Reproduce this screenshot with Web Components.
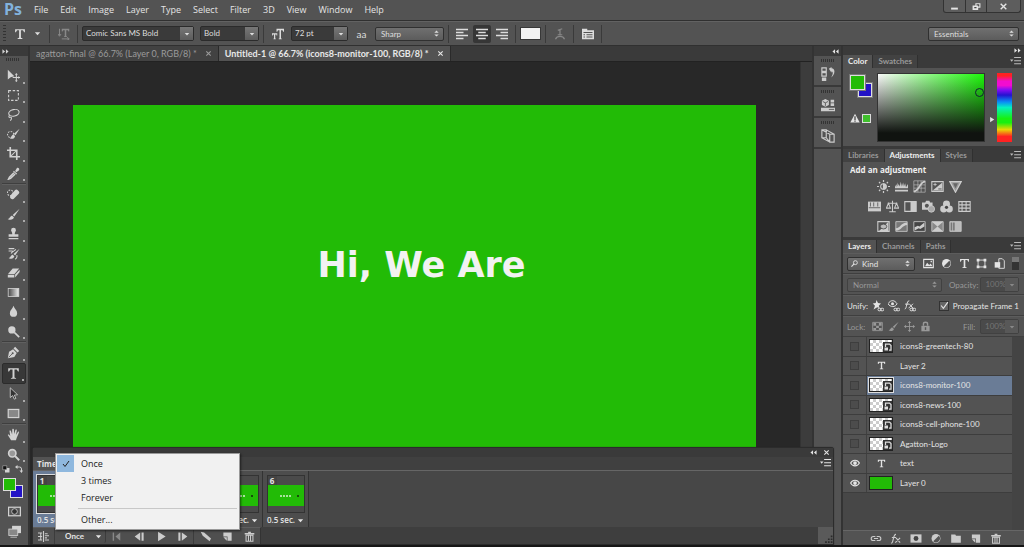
<!DOCTYPE html>
<html lang="en">
<head>
<meta charset="utf-8">
<title>Photoshop workspace</title>
<style>
html,body{margin:0;height:100%;background:#535353;overflow:hidden}
body{font:9px/12px "Open Sans","Noto Sans",sans-serif;color:#e4e4e4}
</style>
</head>
<body>
<ps-app></ps-app>
<script>
const base = `
*,:host{box-sizing:border-box}
button,select,input{font:inherit;color:inherit;margin:0;padding:0;border:0;background:none;appearance:none;outline:0;min-width:0;border-radius:0}
button{display:flex;align-items:center;justify-content:center}
`;
const define = (name, css, html) => customElements.define(name, class extends HTMLElement {
  constructor() { super(); this.attachShadow({mode: 'open'}); }
  connectedCallback() {
    const body = typeof html === 'function' ? html(k => this.getAttribute(k) || '') : html;
    this.shadowRoot.innerHTML = `<style>${base}${css}</style>${body}`;
  }
});

// All glyphs share a 16 x 16 grid.
const S = 'fill="none" stroke="currentColor" stroke-width="1.3"';
const link = `<g ${S}><rect x="8" y="11" width="4" height="3.4" rx="1.5"/><rect x="11.6" y="11" width="4" height="3.4" rx="1.5"/></g>`;
const icons = {
  move: `<path d="M1 1v12l3.500-3 4.500-1z"/><path d="M11.500 6v9M7 10.500h9" ${S}/><path d="M11.500 5l1.800 2h-3.600zM11.500 16l1.800-2h-3.600zM16 10.500l-2-1.800v3.600z"/>`,
  marquee: `<rect x="2" y="2" width="12" height="12" ${S} stroke-dasharray="3 2"/>`,
  lasso: `<ellipse cx="8.500" cy="6" rx="6.500" ry="4" transform="rotate(-12 8 6)" ${S}/><path d="M3 9c-1 1-1 3 1 2.500s2 2 0 4" ${S}/>`,
  quick: `<circle cx="4.500" cy="8" r="3.800" ${S} stroke-dasharray="2 1.500"/><path d="M15.500 1L8.500 7l2 2zM8 8c-2 0-2 3-4.500 4.500 2.500 1.500 6 .5 6.500-2.500z"/>`,
  crop: `<path d="M4 0v12h12M0 4h12v12" fill="none" stroke="currentColor" stroke-width="2"/><path d="M5 11l7-7" ${S}/>`,
  dropper: `<path d="M10 5l2-3.500c1.500-1.500 4 .5 2.800 2.500L11.500 6.500zM8.500 4.500l4 3.800-1 1-4-3.800z"/><path d="M8.500 7L3 12.500 1.800 15l2.600-1L10 8.500" fill="none" stroke="currentColor" stroke-width="1.800"/>`,
  heal: `<circle cx="4" cy="6" r="3.500" ${S} stroke-dasharray="2 1.500"/><path d="M12.500 2l2 2a2.200 2.200 0 010 3L8 13.500a3 3 0 01-4-4L10 2.500a2 2 0 012.500-.5z"/>`,
  brush: `<path d="M15.500 1L7 8.500l2 2zM6.300 9.500c-2.500 0-2 3-5.500 4 3 2 7.500 1 7.700-2z"/>`,
  stamp: `<path d="M8 1a3 3 0 013 3c0 1.500-1.500 2-1.500 5H14v3H2V9h4.500C6.500 6 5 5.500 5 4a3 3 0 013-3zM2 13.500h12V15H2z"/>`,
  history: `<path d="M15.500 2L8 8.500l2 2zM7 9.500c-2 0-2 3-5 4 3 2 6.500 1 7-2z"/><path d="M2 2h7M2 5h5M11 3c-2 2-5 3-6 5M12 10c1 3 0 4-2 5" ${S}/>`,
  eraser: `<path d="M7 3h8L9 10H1zM1 11h8v3H1zM10 10.500l5.500-6v3L10 14z"/>`,
  gradient: `<defs><linearGradient id="g"><stop stop-color="#444"/><stop offset="1" stop-color="#eee"/></linearGradient></defs><rect x="1.500" y="3" width="13" height="10" fill="url(#g)" stroke="currentColor"/>`,
  drop: `<path d="M8 1c1 3.500 4.500 5.500 4.500 9a4.500 4.500 0 01-9 0C3.500 6.500 7 4.500 8 1z"/>`,
  dodge: `<circle cx="6" cy="6" r="4.500"/><path d="M9 9l6 6" fill="none" stroke="currentColor" stroke-width="2"/>`,
  pen: `<path d="M10 1l5 5-2 2-5-5zM7.500 4L2.500 7 1 15l8-1.500 3-5z"/><path d="M2 14l5-5" stroke="#535353"/><circle cx="7" cy="9" r="1.200" fill="#535353"/>`,
  type: `<path d="M1.500 1.500h13v4h-1L12 3H9.200v10l2 .8v.7H4.800v-.7l2-.8V3H4L2.500 5.500h-1z"/>`,
  arrow: `<path d="M4 1v12l3-2.500 2 4.500 2-1-2-4 4-.5z" fill="#333" stroke="currentColor"/>`,
  rect: `<rect x="1.500" y="3" width="13" height="10" fill="#888" stroke="currentColor" stroke-width="1.500"/>`,
  hand: `<path d="M5 15L1 8.500c1-1 2 0 3 1.500L3 3.500c1-1 2 0 2.200 1L6.300 8 6.500 1.500c1-1 2-.5 2 .5l.2 5.500L10.500 2c1-.5 1.800 0 1.500 1l-1 5.500 2.500-4c1-.5 1.500.3 1 1.500L12 12l-1 3z"/>`,
  zoom: `<circle cx="6.500" cy="6.500" r="4.500" fill="#999" stroke="currentColor" stroke-width="2"/><path d="M10 10l5 5" fill="none" stroke="currentColor" stroke-width="2.500"/>`,
  defcol: `<path d="M6 6h9v9H6z"/><path d="M1.500 1.500h8v8h-8z" fill="#111" stroke="currentColor"/>`,
  swap: `<path d="M3 4h6q4 0 4 4v4" fill="none" stroke="currentColor" stroke-width="2"/><path d="M0 4l5-4v8zM13 16l-4-5h7z"/>`,
  mask: `<path d="M0 2h16v12H0z"/><rect x="1.500" y="3.500" width="13" height="9" fill="#555"/><circle cx="8" cy="8" r="3.500" fill="#333" stroke="currentColor"/>`,
  screen: `<path d="M5 1h11v9H5z"/><rect x="1" y="5" width="11" height="8" fill="#888" stroke="currentColor"/><path d="M3 15h8" stroke="currentColor"/>`,
  tri: `<path d="M2 5h12l-6 7z"/>`,
  updown: `<path d="M8 1l5 5H3zM8 15l5-5H3z"/>`,
  orient: `<path d="M5 1h10v3.500h-1L13 3h-2v8h1v1H8v-1h1V3H7L6 4.500H5z"/><path d="M2 1v9M0 8l2 3 2-3M5 14.500h9M12 12.500l3 2-3 2" ${S}/>`,
  size: `<path d="M6 1h10v4h-1l-1-2h-2v11h1v1H9v-1h1V3H8L7 5H6zM0 7h7v3H6V8.500H4.300V14H5v1H2v-1h.7V8.500H1V10H0z"/>`,
  left: `<path d="M0 1h16v2H0zM0 5h10v2H0zM0 9h16v2H0zM0 13h10v2H0z"/>`,
  center: `<path d="M0 1h16v2H0zM3 5h10v2H3zM0 9h16v2H0zM3 13h10v2H3z"/>`,
  right: `<path d="M0 1h16v2H0zM6 5h10v2H6zM0 9h16v2H0zM6 13h10v2H6z"/>`,
  warp: `<path d="M5 3l6-2M8 2v7M2 15c2-5 10-5 12 0M5 9h6" fill="none" stroke="currentColor" stroke-width="1.600"/>`,
  panel: `<path d="M0 1h7v2h9v12H0z"/><path d="M2 6h12M2 9h2M6 9h8M2 12h2M6 12h8" stroke="#444" stroke-width="1.200"/>`,
  ff: `<path d="M1 3l6 5-6 5zM9 3l6 5-6 5z"/>`, rw: `<path d="M7 3L1 8l6 5zM15 3L9 8l6 5z"/>`,
  menu: `<path d="M0 5h5L2.500 8.500zM6 1.500h10V3H6zM6 6h10v1.500H6zM6 10.500h10V12H6z"/>`,
  close: `<path d="M3 3l10 10M13 3L3 13" fill="none" stroke="currentColor" stroke-width="2.500"/>`,
  min: `<path d="M2 10h12v3.500H2z"/>`,
  restore: `<path d="M6 2h9v8h-4v4H1V6h5z"/><path d="M8 4h5v4h-2V6H8zM4 9h4v2H4z" fill="#444"/>`,
  hist: `<path d="M1 1h5v4H1zM1 6.500h5v4H1z" ${S}/><path d="M1 12h5v4H1zM9 2l3-2v1.500c5 0 4 8-.5 10.500C14 8 14 5 12 5v1.500z"/>`,
  props: `<path d="M1 3l4-2 4 2v5l-4 2-4-2zM11 2h4v3h-4zM11 6h4v3h-4zM0 11h16v4H0z"/><path d="M2 4l3 1.500L8 4M5 5.500V9M9 13h6" fill="none" stroke="#535353"/>`,
  comps: `<path d="M1 1h5v9H1zM10 6h5v9h-5zM1 1l9 5M6 1l9 5M1 10l9 5M6 10l4 5" ${S}/>`,
  warn: `<path d="M8 1l7.500 14H.5z"/><path d="M8 5v6M8 12v2" stroke="#444" stroke-width="2"/>`,
  sun: `<circle cx="8" cy="8" r="3.500" ${S}/><path d="M8 5v6a3 3 0 000-6zM8 0v2.500M8 13.500V16M0 8h2.500M13.500 8H16M2.500 2.500l1.500 1.500M12 12l1.500 1.500M13.500 2.500L12 4M4 12l-1.500 1.500" stroke="currentColor" stroke-width="1.500"/>`,
  levels: `<path d="M0 10V6l1.500 3V5L3 8V3l1.500 4V5L6 8l1-6 1.500 6L10 3l1 5 1.500-4 1 5L16 5v5zM0 12h16v2H0z"/>`,
  curves: `<path d="M1 1h14v14H1zM1 6h14M1 10h14M6 1v14M10 1v14" fill="none" stroke="currentColor" stroke-width=".7"/><path d="M1 14c7 0 7-12 14-12" fill="none" stroke="currentColor" stroke-width="2"/>`,
  exposure: `<path d="M1 2h14v12H1z" ${S}/><path d="M14 3v10H2z"/><path d="M3 5.500h4M5 3.500v4" stroke="currentColor"/><path d="M9 11h4" stroke="#444"/>`,
  vibrance: `<path d="M1 2h14L8 15z" fill="#999" stroke="currentColor" stroke-width="1.500"/><path d="M5 4h6l-3 6z" fill="#666"/>`,
  hue: `<path d="M0 2h16v12H0z"/><path d="M3 3v5M7 3v5M12 3v5M1 9.500h14" stroke="#666" stroke-width="1.200"/>`,
  balance: `<path d="M8 1v13M2 4h12M4 14.500h8M3 4l-2.500 6h5zM13 4l-2.500 6h5z" ${S}/>`,
  bw: `<path d="M1 2h14v12H1z" ${S}/><path d="M8 2h7v12H8z"/>`,
  photo: `<path d="M0 3h4l1-2h4l1 2h3v5H9v4H0z"/><circle cx="6" cy="7" r="2.500" fill="#555"/><circle cx="11.500" cy="11" r="4" fill="#aaa" stroke="currentColor"/>`,
  mixer: `<circle cx="8" cy="5" r="4.300"/><circle cx="4.500" cy="11" r="4.300"/><circle cx="11.500" cy="11" r="4.300"/><circle cx="8" cy="9" r="2" fill="#444"/>`,
  grid: `<path d="M1 2h14v12H1zM1 6h14M1 10h14M5 2v12M10 2v12" ${S}/>`,
  invert: `<path d="M1 2h14v12H1z" ${S}/><path d="M2 14L14 2v12z"/><ellipse cx="8" cy="8" rx="4" ry="3" fill="#bbb" stroke="#444"/>`,
  poster: `<path d="M1 2h14v12H1z" fill="#777" stroke="currentColor"/><path d="M1 10c6 0 6-7 14-7v3C9 6 8 13 1 13z"/>`,
  thresh: `<path d="M1 2h14v12H1z" fill="#444" stroke="currentColor"/><path d="M2 9l4-2 2 1 6-5v5l-5 3-2-1-5 3z"/>`,
  selcol: `<path d="M1 2h14v12H1z" fill="#888" stroke="currentColor"/><path d="M1 2l7 6 7-6M1 14l7-6 7 6z"/>`,
  gmap: `<path d="M1 2h14v12H1z" fill="#bbb" stroke="currentColor"/><path d="M3 3v10M6 3v10" stroke="#777" stroke-width="2"/>`,
  search: `<circle cx="10" cy="6" r="4.500" fill="none" stroke="currentColor" stroke-width="2"/><path d="M7 9l-6 6" stroke="currentColor" stroke-width="2.500"/>`,
  image: `<path d="M1 2h14v12H1z" fill="none" stroke="currentColor" stroke-width="1.600"/><path d="M3 12l3-5 3 3 2-2 3 4zM11 4h2v2h-2z"/>`,
  half: `<circle cx="8" cy="8" r="6.500"/><path d="M4 12L12 4a5.500 5.500 0 01-8 8z" fill="#555"/>`,
  shape: `<path d="M3 3h10v10H3z" ${S}/><path d="M1 1h4v4H1zM11 1h4v4h-4zM1 11h4v4H1zM11 11h4v4h-4z"/>`,
  smart: `<path d="M7 1h5l3 3v11H7z" ${S}/><path d="M1 6h8v8H1z"/>`,
  badge: `<path d="M3 8V2h8l3 3v9h-4" fill="none" stroke="currentColor" stroke-width="2.500"/><path d="M1 9h7v6H1z"/>`,
  pinlink: `<path d="M6 0l2 4 4 .5-3 3 1 3-3-1-5 3 2-5-3-3 4-.5z"/>${link}`,
  eyelink: `<path d="M0 5c4-6 9-5 12 0-2 5-9 5-12 0z" ${S}/><circle cx="6" cy="5" r="2"/>${link}`,
  fxlink: `<path d="M1 12c3 0 2-11 6-11M1.500 5.500h5M7 5l5 6M12 5l-6 6" ${S}/>${link}`,
  checker: `<path d="M1 2h14v12H1z" ${S}/><path d="M2 3h4v4H2zM10 3h4v4h-4zM6 7h4v3H6zM2 10h4v3H2zM10 10h4v3h-4z"/>`,
  cross: `<path d="M8 1v14M1 8h14" ${S}/><path d="M8 0l2.500 3h-5zM8 16l2.500-3h-5zM0 8l3-2.500v5zM16 8l-3-2.500v5z"/>`,
  lock: `<path d="M2 7h12v8H2z"/><path d="M5 7V4c0-3 6-3 6 0v3" fill="none" stroke="currentColor" stroke-width="2"/><path d="M8 9v4" stroke="#555" stroke-width="2"/>`,
  eye: `<path d="M1 8c3-6 11-6 14 0-3 6-11 6-14 0z" fill="none" stroke="currentColor" stroke-width="1.800"/><circle cx="8" cy="8" r="3"/>`,
  chain: `<g fill="none" stroke="currentColor" stroke-width="1.600"><path d="M7 5H4a3 3 0 000 6h3M9 5h3a3 3 0 010 6H9M5 8h6"/></g>`,
  fx: `<path d="M1 15c4 0 2-13 7-13M2 6.500h6M8 7l6 7M14 7l-7 7" fill="none" stroke="currentColor" stroke-width="1.600"/>`,
  addmask: `<path d="M0 2h16v12H0z"/><circle cx="8" cy="8" r="3.500" fill="#444"/>`,
  folder: `<path d="M1 2h6l1 2h7v10H1z"/>`,
  page: `<path d="M2 2h12v12H8V8H2z"/><path d="M2 9h5v5z"/>`,
  trash: `<path d="M1 3h14v2H1zM6 1h4v2H6z"/><path d="M3 6h10v9H3zM6.500 6v9M9.500 6v9" fill="none" stroke="currentColor" stroke-width="1.500"/>`,
  tween: `<path d="M1 1l5 1 10 9-2 4-10-8z"/>`,
  first: `<path d="M1 2h2v12H1zM12 2v12L5 8z"/>`,
  prev: `<path d="M9 2v12L1 8zM11 2h3v12h-3z"/>`,
  play: `<path d="M3 1l11 7-11 7z"/>`,
  next: `<path d="M7 2v12l8-6zM2 2h3v12H2z"/>`,
  convert: `<path d="M0 3h6M0 8h6M0 13h6M8 0v16M10 4h4M10 7h6M10 10h3M10 13h6M4 3v10" fill="none" stroke="currentColor" stroke-width="1.600"/>`,
  check: `<path d="M2 8l4 5 8-11" fill="none" stroke="currentColor" stroke-width="2"/>`,
  grip: `<path d="M12 1h3v3h-3zM12 6h3v3h-3zM7 6h3v3H7zM12 11h3v3h-3zM7 11h3v3H7zM2 11h3v3H2z"/>`
};
define('ps-icon', `:host{display:inline-flex;width:12px;height:12px;flex:none}svg{width:100%;height:100%}`,
  a => `<svg viewBox="0 0 16 16" fill="currentColor" aria-hidden="true">${icons[a('name')]}</svg>`);
const I = (n, c = '') => `<ps-icon name="${n}" class="${c}"></ps-icon>`;

// Editable combo box with a drop button.
define('ps-combo', `
:host{display:flex;height:15px;border:1px solid #2b2b2b;border-radius:2px;background:#3a3a3a;font:8px/13px Lato,sans-serif}
input{flex:1;width:0;padding-left:3px}
button{width:13px;background:linear-gradient(#777,#5c5c5c)}ps-icon{width:6px;height:6px}
:host([dim]){color:#757575;background:#4a4a4a;border-color:#414141}:host([dim]) button{background:#585858;color:#888}:host([dim]) input{padding-left:4px}
`, a => `<input type="text" aria-label="${a('label')}" value="${a('value')}"><button aria-label="Open ${a('label')}">${I('tri')}</button>`);

define('ps-select', `
:host{display:flex;align-items:center;height:14px;border:1px solid #303030;border-radius:2px;background:linear-gradient(#707070,#5c5c5c);font:8px/12px Lato,sans-serif;padding:0 3px;gap:2px}
select{flex:1;padding:0 2px;height:12px}ps-icon{width:7px;height:7px}
:host([dim]){background:#565656;color:#999;border-color:#414141}
:host([flat]){background:none;border:0}
`, a => `${a('icon') ? I(a('icon')) : ''}<select aria-label="${a('label')}"><option>${a('value')}</option></select>${I(a('arrow') || 'updown')}`);

define('ps-menu-bar', `
:host{display:flex;height:21px;background:#535353;border-bottom:1px solid #303030;padding-left:4px;align-items:flex-start;font:9px/20px "Open Sans",sans-serif}
b{font:bold 16px/19px "Open Sans",sans-serif;color:#82b2dc;width:30px}
nav{display:flex;gap:12px;flex:1}
a{color:inherit;text-decoration:none}
.win{display:flex;height:13px;border:1px solid #333;border-top:0;border-radius:0 0 3px 3px;background:#5d5d5d;margin-right:3px}
.win button{width:21px}.win button+button{border-left:1px solid #333}.win button:last-child{width:34px}
ps-icon{width:9px;height:9px}
`, `<b>Ps</b><nav>${['File','Edit','Image','Layer','Type','Select','Filter','3D','View','Window','Help'].map(t => `<a href="#">${t}</a>`).join('')}</nav>
<div class="win"><button aria-label="Minimize">${I('min')}</button><button aria-label="Restore">${I('restore')}</button><button aria-label="Close">${I('close')}</button></div>`);

define('ps-options-bar', `
:host{display:flex;align-items:center;height:25px;border-top:1px solid #626262;background:#535353;border-bottom:1px solid #303030;padding:0 5px 0 3px;color:#ddd}
i{width:1px;height:18px;background:#3a3a3a;flex:none}
.grip{width:3px;background:repeating-linear-gradient(#333 0 1px,#535353 1px 3px)}
.c{display:flex;align-items:center;justify-content:center;flex:none}
.tool{width:43px;gap:8px}.cell{width:27px}
.font{width:112px;margin:0 6px 0 4px}.style{width:59px;margin-right:4px}.size{width:57px}.aa{width:69px;margin-right:4px}.ws{width:91px;margin-left:auto}
.arrow{width:7px;height:7px}
.align{display:flex;gap:2px;padding:0 4px}.align button{width:18px;height:18px}.align .on{background:#363636;border-radius:2px}
.swatch{width:21px;height:13px;background:#f2f2f2;border:1px solid #383838;margin:0 4px}
.dim{color:#888}small{font:10px/12px Lato,sans-serif}
`, `<i class="grip"></i>
<button class="c tool" aria-label="Type tool">${I('type')}${I('tri','arrow')}</button><i></i>
<button class="c cell dim" aria-label="Text orientation">${I('orient')}</button><i></i>
<ps-combo class="font" label="Font family" value="Comic Sans MS Bold"></ps-combo>
<ps-combo class="style" label="Font style" value="Bold"></ps-combo><i></i>
<span class="c cell">${I('size')}</span>
<ps-combo class="size" label="Font size" value="72 pt"></ps-combo>
<span class="c cell"><small>aa</small></span>
<ps-select class="aa" label="Anti-aliasing" value="Sharp"></ps-select><i></i>
<div class="align"><button aria-label="Left align">${I('left')}</button><button class="on" aria-label="Center">${I('center')}</button><button aria-label="Right align">${I('right')}</button></div><i></i>
<button class="swatch" aria-label="Text color"></button><i></i>
<button class="c cell dim" aria-label="Warp text">${I('warp')}</button><i></i>
<button class="c cell" aria-label="Character panel">${I('panel')}</button><i></i>
<ps-select class="ws" label="Workspace" value="Essentials"></ps-select>`);

const tools = [['move','marquee','lasso','quick','crop','dropper'],['heal','brush','stamp','history','eraser','gradient','drop','dodge'],['pen','type','arrow','rect'],['hand','zoom']];
define('ps-toolbox', `
:host{display:flex;flex-direction:column;width:30px;background:#535353;border-right:2px solid #333;color:#d2d2d2;padding-bottom:4px}
header{height:10px;background:#3a3a3a;padding-left:2px;display:flex;align-items:center}header ps-icon{width:7px;height:7px}
.grip{height:3px;width:14px;margin:2px 6px 5px;background:repeating-linear-gradient(90deg,#333 0 1px,#535353 1px 2px)}
.tools{flex:1;display:flex;flex-direction:column}
.tools button{flex:1;position:relative;margin:0 2px;padding-right:1px;border-radius:2px}
.tools button::after{content:"";position:absolute;right:1px;bottom:2px;border:1px solid #aaa}
.tools button.on{background:#383838;border:1px solid #2c2c2c}
ps-icon{width:13px;height:13px}
hr{height:2px;margin:0 2px;border:0;background:#3f3f3f;border-bottom:1px solid #606060}
.mini{display:flex;height:10px;justify-content:space-between;padding:0 5px 0 2px}.mini ps-icon{width:8px;height:8px}
.cols{display:grid;grid-template:7px 6px 7px/7px 6px 7px;margin:4px 3px 3px}
.cols button{border:1px solid #ddd}.fg{grid-area:1/1/3/3;background:#22bb06;z-index:1}.bg{grid-area:2/2/4/4;background:#2313c6}
.wide{height:20px}
`, `<header>${I('ff')}</header><div class="grip"></div>
<div class="tools">${tools.map(g => g.map(t => `<button class="${t==='type'?'on':''}" aria-label="${t}">${I(t)}</button>`).join('')).join('<hr>')}</div>
<div class="mini"><button aria-label="Default colors">${I('defcol')}</button><button aria-label="Swap colors">${I('swap')}</button></div>
<div class="cols"><button class="fg" aria-label="Foreground color"></button><button class="bg" aria-label="Background color"></button></div>
<button class="wide" aria-label="Quick mask">${I('mask')}</button><button class="wide" aria-label="Screen mode">${I('screen')}</button>`);

define('ps-document', `
:host{display:flex;flex-direction:column;flex:1;min-width:0}
.tabs{display:flex;height:15px;background:#3a3a3a;font:9px/14px Lato,sans-serif}
.tab{display:flex;align-items:center;gap:8px;padding:0 6px;color:#9b9b9b;background:#424242;border-right:1px solid #2a2a2a;white-space:nowrap}
.tab.on{background:#535353;color:#e8e8e8;font-weight:bold}
.tab ps-icon{width:7px;height:7px}
.view{flex:1;display:flex;background:#282828;min-height:0;overflow:hidden;border-top:1px solid #222}
.stage{flex:1;padding:43px 44px 0 43px}
.art{height:384px;background:#22bb06;padding:136px 0 0 14px;text-align:center;color:#f2f2f2;font:bold 35px/48px "Comic Sans MS","DejaVu Sans",sans-serif;white-space:nowrap}
.art p{margin:0}
.bar{width:12px;background:#3c3c3c;border-left:1px solid #333}
`, `<div class="tabs"><div class="tab"><span>agatton-final @ 66.7% (Layer 0, RGB/8) *</span><button aria-label="Close">${I('close')}</button></div>
<div class="tab on"><span>Untitled-1 @ 66.7% (icons8-monitor-100, RGB/8) *</span><button aria-label="Close">${I('close')}</button></div></div>
<div class="view"><div class="stage"><div class="art"><p>Hi, We Are</p></div></div><div class="bar"></div></div>`);

define('ps-strip', `
:host{display:flex;flex-direction:column;width:31px;background:#535353;border:solid #333;border-width:0 2px}
header{height:10px;background:#3a3a3a;display:flex;justify-content:flex-end;align-items:center;padding-right:2px}header ps-icon{width:7px;height:7px}
button{height:31px;flex-direction:column;justify-content:flex-start;gap:5px;padding-top:3px;border-bottom:2px solid #393939;color:#ccc}
button::before{content:"";width:14px;height:3px;background:repeating-linear-gradient(90deg,#333 0 1px,#535353 1px 2px)}
button ps-icon{width:14px;height:14px}
`, `<header>${I('rw')}</header><button aria-label="History">${I('hist')}</button><button aria-label="Properties">${I('props')}</button><button aria-label="Layer comps">${I('comps')}</button>`);

// Tabbed panel: the active tab is shown raised, the body is slotted.
define('ps-panel', `
:host{display:block;background:#535353;border-bottom:3px solid #3a3a3a}
nav{display:flex;height:13px;background:#3a3a3a;font:bold 8px/13px Lato,sans-serif;color:#999}
nav button{padding:0 5px;background:#424242;border-right:1px solid #303030}
nav .on{background:#535353;color:#eee}
nav .m{margin-left:auto;background:none;border:0;padding:0 3px;color:#bbb}ps-icon{width:11px;height:11px}
`, a => `<nav>${a('tabs').split(',').map((t, i) => `<button class="${i == +a('active') ? 'on' : ''}">${t}</button>`).join('')}<button class="m" aria-label="Panel menu">${I('menu')}</button></nav><slot></slot>`);

define('ps-color', `
:host{display:flex;height:78px;padding:5px 12px 4px 7px;align-items:stretch}
.l{width:27px;display:flex;flex-direction:column}
.cols{display:grid;grid-template:8px 7px 7px/8px 7px 7px;margin:2px 0 16px}
.cols button{border:1px solid #ddd;outline:1px solid #777}.fg{grid-area:1/1/3/3;background:#22bb06;z-index:1}.bg{grid-area:2/2/4/4;background:#2313c6}
.w{display:flex;gap:2px;align-items:center}.w ps-icon{width:10px;height:10px}.w button{width:9px;height:9px;background:#3fbf2c;border:1px solid #ddd}
.field{flex:1;position:relative;border:1px solid #333;background:linear-gradient(transparent,#101310 88%),linear-gradient(90deg,#fafafa,#1cf80a)}
.ring{position:absolute;right:0;top:14px;width:9px;height:9px;border:1px solid #123;border-radius:50%}
.hue{width:15px;background:linear-gradient(#f22 4%,#f20cd0 12%,#f20cd0 18%,#8a0cf5 24%,#2412d0 32%,#0a8df5 42%,#05f0c0 50%,#18f010 66%,#18f010 72%,#e8d805 82%,#f22 92%)}
.p{width:12px;display:flex;align-items:center;padding:24px 0 0 4px}.p ps-icon{width:6px;height:7px}
`, `<div class="l"><div class="cols"><button class="fg" aria-label="Foreground"></button><button class="bg" aria-label="Background"></button></div><div class="w">${I('warn')}<button aria-label="In-gamut color"></button></div></div>
<div class="field"><div class="ring"></div></div><div class="p">${I('play')}</div><div class="hue"></div>`);

define('ps-adjustments', `
:host{display:block;height:75px;padding:2px 7px 0;color:#ccc}
h2{margin:0;font:bold 8px/12px "Open Sans",sans-serif;color:#eee}
div{display:flex;justify-content:center;gap:5px;height:20px;align-items:center;padding-right:28px}
ps-icon{width:13px;height:13px}
`, `<h2>Add an adjustment</h2>${[['sun','levels','curves','exposure','vibrance'],['hue','balance','bw','photo','mixer','grid'],['invert','poster','thresh','selcol','gmap']].map(r => `<div>${r.map(n => `<button aria-label="${n}">${I(n)}</button>`).join('')}</div>`).join('')}`);

define('ps-layer', `
:host{display:grid;grid-template-columns:24px 1fr;border-bottom:1px solid #3d3d3d;font:8px/18px Lato,sans-serif;min-height:0}
.v{display:flex;align-items:center;justify-content:center;border-right:1px solid #404040}
.v input{width:9px;height:9px;border:1px solid #3e3e3e;background:#4c4c4c}
.v ps-icon{width:10px;height:10px}
.r{display:flex;align-items:center;padding-left:2px}
.t{width:24px;height:14px;border:1px solid #222;display:flex;justify-content:flex-end;align-items:flex-end;margin-right:7px}
.t.so{background:conic-gradient(#ccc 25%,#fff 0 50%,#ccc 0 75%,#fff 0) 0 0/6px 6px}
.t.fill{background:#22bb06}.t.txt{border:0;justify-content:center;align-items:center}
.t.txt ps-icon{width:9px;height:9px}
.badge{width:9px;height:10px;background:#333;color:#ddd;display:flex;align-items:center;justify-content:center}.badge ps-icon{width:8px;height:8px}
:host([on]){background:linear-gradient(90deg,#535353 24px,#6a7c96 24px)}:host([on]) .t{outline:1px solid #ddd}
`, a => `<div class="v">${a('eye') ? I('eye') : `<input type="checkbox" aria-label="Show ${a('name')}">`}</div>
<div class="r"><span class="t ${a('kind')}">${a('kind') === 'so' ? `<span class="badge">${I('badge')}</span>` : a('kind') === 'txt' ? I('type') : ''}</span><span>${a('name')}</span></div>`);

const layers = [['icons8-greentech-80','so'],['Layer 2','txt'],['icons8-monitor-100','so','on'],['icons8-news-100','so'],['icons8-cell-phone-100','so'],['Agatton-Logo','so'],['text','txt','eye="1"'],['Layer 0','fill','eye="1"']];
define('ps-layers', `
:host{display:flex;flex-direction:column;flex:1;font:8px/12px Lato,sans-serif}
.row{display:flex;align-items:center;height:21px;border-bottom:1px solid #3f3f3f;border-top:1px solid #5c5c5c;padding:0 5px 0 4px}
.dim{color:#999}
.kind{width:68px}.filters{display:flex;flex:1;justify-content:space-between;padding:0 7px 0 8px}.filters ps-icon{width:11px;height:11px}
.tog{width:7px;height:13px;background:linear-gradient(#777 40%,#333 0)}
.mode{width:96px;margin-right:7px}.pct{width:39px}.pct-l{width:32px}
.u{display:flex;gap:4px;padding-left:4px;flex:1}
.u ps-icon{width:12px;height:12px}
label{display:flex;align-items:center;gap:4px;white-space:nowrap}
label span{position:relative;display:flex;width:10px;height:10px}label input{width:10px;height:10px;border:1px solid #333;background:#666}
label span ps-icon{position:absolute;left:1px;bottom:1px;width:9px;height:9px}
.lock{display:flex;gap:5px;flex:1;padding-left:7px}.lock ps-icon{width:11px;height:11px}.fill-l{width:17px}
.scroll{flex:1;background:#474747;border-right:12px solid #444}
.list{display:grid;grid-auto-rows:1fr;height:156px;background:#535353}
footer{display:flex;justify-content:center;gap:8px;align-items:center;height:15px;background:#535353;border-top:1px solid #666;color:#ccc;padding-left:5px}footer ps-icon{width:12px;height:11px}
`, `<div class="row"><ps-select class="kind" icon="search" label="Filter type" value="Kind"></ps-select><div class="filters">${['image','half','type','shape','smart'].map(n => `<button aria-label="Filter ${n}">${I(n)}</button>`).join('')}</div><button class="tog" aria-label="Toggle filter"></button></div>
<div class="row dim"><ps-select dim class="mode" label="Blend mode" value="Normal"></ps-select><span class="pct-l">Opacity:</span><ps-combo dim class="pct" label="Opacity" value="100%"></ps-combo></div>
<div class="row"><span>Unify:</span><div class="u">${I('pinlink')}${I('eyelink')}${I('fxlink')}</div><label><span><input type="checkbox" checked>${I('check')}</span>Propagate Frame 1</label></div>
<div class="row dim"><span>Lock:</span><div class="lock">${['checker','brush','cross','lock'].map(n => `<button aria-label="${n}">${I(n)}</button>`).join('')}</div><span class="fill-l">Fill:</span><ps-combo dim class="pct" label="Fill" value="100%"></ps-combo></div>
<div class="scroll"><div class="list">${layers.map(l => `<ps-layer name="${l[0]}" kind="${l[1]}" ${l[2] || ''}></ps-layer>`).join('')}</div></div>
<footer>${['chain','fx','addmask','half','folder','page','trash'].map(n => `<button aria-label="${n}">${I(n)}</button>`).join('')}</footer>`);

define('ps-frame', `
:host{display:flex;flex-direction:column;align-items:center;width:46px;flex:none;border-right:1px solid #333;background:#4d4d4d;padding-top:4px;font:600 8px/14px "Open Sans",sans-serif}
.box{width:38px;height:39px;border:1px solid #333;display:flex;flex-direction:column;background:#4a4a4a}
.box b{width:9px;height:9px;font:bold 8px/9px "Open Sans",sans-serif;text-align:center;background:#444}
.g{height:21px;background:#22bb06;display:flex;align-items:center;justify-content:center;gap:5px;padding-left:8px}
.g::before{content:"";width:12px;height:2px;background:repeating-linear-gradient(90deg,#a8e29c 0 2px,#22bb06 2px 3px)}
.g::after{content:"";width:2px;height:2px;background:#164d08}
.d{display:flex;align-items:center;gap:2px;white-space:nowrap}.d ps-icon{width:7px;height:7px}
:host([on]){background:#6a7c96}:host([on]) .box{outline:1px solid #ddd}
`, a => `<div class="box"><b>${a('n')}</b><div class="g"></div></div>${a('delay') ? `<button class="d">${a('delay')}${I('tri')}</button>` : ''}`);

define('ps-loop-menu', `
:host{display:block;background:#f1f1f1;border:1px solid #999;box-shadow:1px 1px 2px #0008;color:#222;font:9px/16px "Open Sans",sans-serif;padding:1px}
button{width:100%;height:17px;justify-content:flex-start}
button span{width:17px;height:17px;margin-right:7px;display:flex;align-items:center;justify-content:center}
.on span{background:#8fb8de}ps-icon{width:8px;height:8px}
hr{border:0;border-top:1px solid #c8c8c8;margin:2px 1px 2px 21px}
`, `<button class="on" role="menuitem"><span>${I('check')}</span>Once</button><button role="menuitem"><span></span>3 times</button><button role="menuitem"><span></span>Forever</button><hr><button role="menuitem"><span></span>Other...</button>`);

const frames = ['n="1" delay="0.5 sec." on', '', '', '', 'delay="0.5 sec."', 'n="6" delay="0.5 sec."'];
define('ps-timeline', `
:host{display:flex;flex-direction:column;background:#474747;border:1px solid #2c2c2c;border-radius:3px 3px 0 0;box-shadow:0 0 1px #222}
.bar{height:9px;background:#3a3a3a;display:flex;justify-content:flex-end;align-items:center;gap:6px;padding-right:3px}.bar ps-icon{width:7px;height:7px}
.tabs{display:flex;height:14px;background:#404040;justify-content:space-between;align-items:center;border-bottom:1px solid #666;padding-right:2px;font:bold 8px/13px "Open Sans",sans-serif}
.tabs button:first-child{background:#535353;padding:0 4px;height:13px}.tabs ps-icon{width:11px;height:11px}
.frames{flex:1;display:flex;min-height:0}
footer{display:flex;height:17px;background:#3e3e3e}
.ctl{display:flex;width:228px;background:#4f4f4f;border-top:1px solid #5e5e5e;align-items:center;border-right:1px solid #333}
.ctl button{width:22px;height:16px;color:#ccc}.ctl .s{border-right:1px solid #3c3c3c}.ctl ps-icon{width:11px;height:11px}
.once{flex:1;border-right:1px solid #3c3c3c;padding-left:8px;font-weight:bold}
.ctl .dim{color:#888}
.grip{margin-left:auto;width:15px;background:#5a5a5a;color:#2a2a2a;display:flex;align-items:flex-end;justify-content:flex-end}.grip ps-icon{width:9px;height:9px}
.menu{position:absolute;left:22px;top:5px;width:185px}
`, `<div class="bar">${I('rw')}${I('close')}</div><div class="tabs"><button>Timeline</button>${I('menu')}</div>
<div class="frames">${frames.map(f => `<ps-frame ${f}></ps-frame>`).join('')}</div>
<footer><div class="ctl"><button class="s" aria-label="Convert">${I('convert')}</button><ps-select flat class="once" arrow="tri" label="Loop" value="Once"></ps-select>
<button class="dim" aria-label="First frame">${I('first')}</button>${['prev','play','next','tween','page','trash'].map(n => `<button class="${n === 'next' ? 's' : ''}" aria-label="${n}">${I(n)}</button>`).join('')}</div><div class="grip">${I('grip')}</div></footer>
<ps-loop-menu class="menu" role="menu"></ps-loop-menu>`);

define('ps-app', `
:host{display:flex;flex-direction:column;height:100vh;border-bottom:2px solid #161616}
main{flex:1;display:flex;position:relative;min-height:0}
aside{width:181px;display:flex;flex-direction:column}
aside header{height:9px;background:#3a3a3a;display:flex;justify-content:flex-end;align-items:center;padding-right:3px}aside header ps-icon{width:7px;height:7px}
.layers{flex:1;display:flex;flex-direction:column;border:0}
ps-timeline{position:absolute;left:32px;right:190px;bottom:0;height:98px}
`, `<ps-menu-bar></ps-menu-bar><ps-options-bar></ps-options-bar>
<main><ps-toolbox></ps-toolbox><ps-document></ps-document><ps-strip></ps-strip>
<aside><header>${I('ff')}</header>
<ps-panel tabs="Color,Swatches" active="0"><ps-color></ps-color></ps-panel>
<ps-panel tabs="Libraries,Adjustments,Styles" active="1"><ps-adjustments></ps-adjustments></ps-panel>
<ps-panel class="layers" tabs="Layers,Channels,Paths" active="0"><ps-layers></ps-layers></ps-panel></aside>
<ps-timeline></ps-timeline></main>`);
</script>
</body>
</html>
